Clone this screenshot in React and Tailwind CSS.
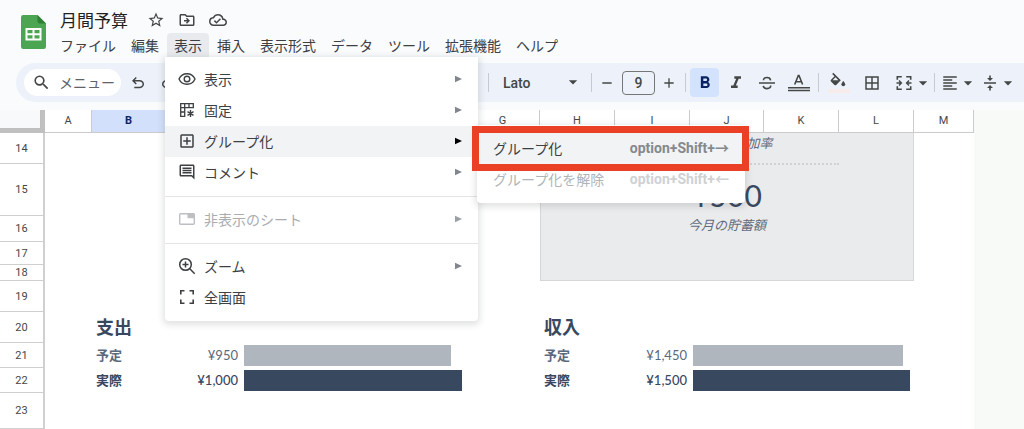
import React from "react";
import {
  MdAdd,
  MdArrowDropDown,
  MdBorderAll,
  MdFormatAlignLeft,
  MdFormatBold,
  MdFormatItalic,
  MdOutlineAddBox,
  MdOutlineCloudDone,
  MdOutlineComment,
  MdOutlineDriveFileMove,
  MdRemove,
  MdSearch,
  MdStarBorder,
} from "react-icons/md";

function SheetsLogo() {
  return (
    <svg viewBox="0 0 25 34" className="h-[34px] w-[25px] shrink-0" aria-hidden="true">
      <path d="M2.3 0H16.5L25 8.5V31.7A2.3 2.3 0 0 1 22.700 34H2.300A2.300 2.300 0 0 1 0 31.700V2.300A2.300 2.300 0 0 1 2.300 0Z" fill="#4ba551" />
      <path d="M16.500 0 25 8.500H18.500A2 2 0 0 1 16.500 6.500Z" fill="#2f7f36" />
      <path fillRule="evenodd" d="M4.500 13H20.500V25.500H4.500ZM6.500 15V18.300H11.500V15ZM13.500 15V18.300H18.500V15ZM6.500 20.300V23.500H11.500V20.300ZM13.500 20.300V23.500H18.500V20.300Z" fill="#fff" />
    </svg>
  );
}

function UndoIcon({ className }) {
  return (
    <svg viewBox="0 -960 960 960" fill="currentColor" className={className} aria-hidden="true">
      <path d="M280-200v-80h284q63 0 109.500-40T720-420q0-60-46.500-100T564-560H312l104 104-56 56-200-200 200-200 56 56-104 104h252q97 0 169.500 63T800-420q0 94-72.500 157T564-200H280Z" />
    </svg>
  );
}

function EyeIcon() {
  return (
    <svg viewBox="0 0 18 14" className="h-[14px] w-[18px] shrink-0" fill="none" stroke="currentColor" strokeWidth="1.400" aria-hidden="true">
      <path d="M1 7C2.500 3.600 5.500 1.700 9 1.700S15.500 3.600 17 7C15.500 10.400 12.500 12.300 9 12.300S2.500 10.400 1 7Z" />
      <circle cx="9" cy="7" r="2.800" />
    </svg>
  );
}

function ZoomIcon() {
  return (
    <svg viewBox="0 0 18 18" className="size-[18px] shrink-0" fill="none" stroke="currentColor" strokeWidth="1.500" aria-hidden="true">
      <circle cx="7.500" cy="7.500" r="5.800" />
      <path d="M11.800 11.800 16.700 16.700M7.500 4.500V10.500M4.500 7.500H10.500" />
    </svg>
  );
}

function HiddenSheetIcon() {
  return (
    <svg viewBox="0 0 18 14" className="h-[14px] w-[18px] shrink-0 text-[#bdbfc2]" aria-hidden="true">
      <rect x="1.700" y="1.700" width="14.600" height="10.600" rx="1" fill="none" stroke="currentColor" strokeWidth="1.400" />
      <path d="M9.500 1.700H16.300V6.200H9.500Z" fill="currentColor" />
    </svg>
  );
}

function FreezeIcon() {
  return (
    <svg viewBox="0 0 16 16" className="size-4" fill="none" stroke="currentColor" strokeWidth="1.300" aria-hidden="true">
      <path d="M1.700 14.300V1.700H14.300V5.700H5.700V14.300ZM5.700 1.700V5.700H1.700M10 1.700V5.700M1.700 10H5.700" />
      <path d="M11.500 8V15M8.500 9.700 14.500 13.300M14.500 9.700 8.500 13.300" strokeWidth="1.400" />
    </svg>
  );
}

function FullscreenIcon() {
  return (
    <svg viewBox="0 0 16 16" className="size-4" fill="none" stroke="currentColor" strokeWidth="1.600" aria-hidden="true">
      <path d="M1.800 5.500V1.800H5.500M10.500 1.800H14.200V5.500M14.200 10.500V14.200H10.500M5.500 14.200H1.800V10.500" />
    </svg>
  );
}

function StrikeIcon() {
  return (
    <svg viewBox="0 0 18 18" className="size-[18px]" fill="none" stroke="currentColor" strokeWidth="1.600" aria-hidden="true">
      <path d="M1 9H17" />
      <path d="M12.600 6.300C12.300 4.400 11 3.500 9 3.500 6.900 3.500 5.500 4.500 5.500 6.200M5.200 11.800C5.500 13.600 6.900 14.600 9 14.600 11.200 14.600 12.700 13.500 12.700 11.600" />
    </svg>
  );
}

function TextColorIcon() {
  return (
    <svg viewBox="0 0 24 18" className="h-[18px] w-6" fill="none" stroke="currentColor" aria-hidden="true">
      <path d="M7.700 10.500 11.300 1.500H12L15.600 10.500M9 7.700H14.300" strokeWidth="1.600" />
      <path d="M1 13.700H23M1 16.500H23" strokeWidth="1.500" />
    </svg>
  );
}

function FillColorIcon() {
  return (
    <svg viewBox="0 0 24 22" className="h-[22px] w-6" aria-hidden="true">
      <path fillRule="evenodd" d="M6.300 .800 13.800 8.300 9.200 12.900A1.200 1.200 0 0 1 7.500 12.900L4 9.400A1.200 1.200 0 0 1 4 7.700L7.500 4.200 5.200 1.900ZM8.500 5.300 5.600 8.200H11.400Z" fill="currentColor" />
      <path d="M16.300 8.900S18.200 11.100 18.200 12.300A1.900 1.900 0 0 1 14.400 12.300C14.400 11.100 16.300 8.900 16.300 8.900Z" fill="currentColor" />
      <rect x="1" y="17" width="22" height="4" fill="#f7ece9" />
    </svg>
  );
}

function MergeIcon() {
  return (
    <svg viewBox="0 0 18 16" className="h-4 w-[18px] shrink-0" fill="none" stroke="currentColor" strokeWidth="1.600" aria-hidden="true">
      <path d="M6.800 1.800H2.300V4.800M2.300 11.200V14.200H6.800M11.200 1.800H15.700V4.800M15.700 11.200V14.200H11.200" />
      <path d="M1.500 8H6M4 5.600 6.400 8 4 10.400M16.500 8H12M14 5.600 11.600 8 14 10.400" strokeWidth="1.400" />
    </svg>
  );
}

function VerticalMiddleIcon() {
  return (
    <svg viewBox="0 0 18 18" className="size-[18px] shrink-0" aria-hidden="true">
      <path d="M3 8.200H15V9.800H3ZM8.200 1.500H9.800V4H12L9 7 6 4H8.200ZM8.200 16.500H9.800V14H12L9 11 6 14H8.200Z" fill="currentColor" />
    </svg>
  );
}

const menus = ["ファイル", "編集", "表示", "挿入", "表示形式", "データ", "ツール", "拡張機能", "ヘルプ"];

function MenuRow({ icon, label, arrow = true, active = false, disabled = false }) {
  return (
    <button
      type="button"
      role="menuitem"
      disabled={disabled}
      className={`flex h-[31px] w-full items-center pr-4 pb-px pl-[13px] text-left ${active ? "bg-[#f1f3f4]" : ""} ${disabled ? "text-[#a9acb0]" : "text-[#3c4043]"}`}
    >
      <span className="flex w-[18px] justify-center">{icon}</span>
      <span className="ml-2 flex-1">{label}</span>
      {arrow && (
        <svg viewBox="0 0 7 8" className={`h-2 w-[7px] ${active ? "text-black" : disabled ? "text-[#9aa0a6]" : "text-[#80868b]"}`} aria-hidden="true">
          <path d="M0 .700 7 4 0 7.300Z" fill="currentColor" />
        </svg>
      )}
    </button>
  );
}

function Divider() {
  return <div role="separator" className="mt-2 mb-[7px] h-px bg-[#e3e5e7]" />;
}

function Submenu() {
  return (
    <div role="menu" className="absolute -top-px left-full z-30 -ml-px w-[268px] rounded bg-white py-2 shadow-[0_2px_6px_2px_rgba(60,64,67,0.15)]">
      <div className="relative">
        <button type="button" role="menuitem" className="flex h-[31px] w-full items-center justify-between bg-[#f1f3f4] px-4 pb-px text-[#3c4043]">
          グループ化
          <kbd className="font-['Roboto','Noto_Sans_CJK_JP',sans-serif] font-bold text-[#85898c]">option+Shift+→</kbd>
        </button>
        <div className="pointer-events-none absolute -top-[7px] -right-1 -bottom-[7px] -left-[5px] border-[7px] border-[#ea4025]" />
      </div>
      <button type="button" role="menuitem" disabled className="flex h-[31px] w-full items-center justify-between px-4 pb-px text-[#b0b4b8]">
        グループ化を解除
        <kbd className="font-['Roboto','Noto_Sans_CJK_JP',sans-serif] font-bold text-[#cfd1d3]">option+Shift+←</kbd>
      </button>
    </div>
  );
}

function ViewMenu() {
  return (
    <div role="menu" className="absolute top-full -left-0.5 z-20 w-[313px] rounded-b bg-white pt-[7px] pb-2 shadow-[0_2px_6px_2px_rgba(60,64,67,0.15)]">
      <MenuRow icon={<EyeIcon />} label="表示" />
      <MenuRow icon={<FreezeIcon />} label="固定" />
      <div className="relative">
        <MenuRow icon={<MdOutlineAddBox className="size-[18px] shrink-0" />} label="グループ化" active />
        <Submenu />
      </div>
      <MenuRow icon={<MdOutlineComment className="size-[18px] shrink-0" />} label="コメント" />
      <Divider />
      <MenuRow icon={<HiddenSheetIcon />} label="非表示のシート" disabled />
      <Divider />
      <MenuRow icon={<ZoomIcon />} label="ズーム" />
      <MenuRow icon={<FullscreenIcon />} label="全画面" arrow={false} />
    </div>
  );
}

function Header() {
  return (
    <header className="flex">
      <div className="w-[53px] shrink-0 pt-[15px] pl-[21px]">
        <SheetsLogo />
      </div>
      <div className="min-w-0 flex-1">
        <div className="flex h-[33px] items-center pt-2 pb-px pl-[7px] text-[#444746]">
          <h1 className="text-[17px] leading-6 text-[#1f1f1f]">月間予算</h1>
          <button type="button" aria-label="スター" className="ml-[19px]"><MdStarBorder className="size-[18px]" /></button>
          <button type="button" aria-label="移動" className="ml-[13px]"><MdOutlineDriveFileMove className="size-[18px]" /></button>
          <button type="button" aria-label="保存済み" className="ml-[13px]"><MdOutlineCloudDone className="size-[18px]" /></button>
        </div>
        <nav className="flex gap-px text-[14px] text-[#3c4043]">
          {menus.map((m) => (
            <div key={m} className="relative shrink-0">
              <button type="button" className={`h-6 px-[7px] leading-6 ${m === "表示" ? "rounded-t bg-[#e8eaed]" : ""}`}>{m}</button>
              {m === "表示" && <ViewMenu />}
            </div>
          ))}
        </nav>
      </div>
    </header>
  );
}

function Sep({ className = "" }) {
  return <div className={`h-[19px] w-px shrink-0 bg-[#c7cbd1] ${className}`} />;
}

function Tool({ label, className, children }) {
  return (
    <button type="button" aria-label={label} className={`flex h-[29px] shrink-0 items-center justify-center ${className}`}>
      {children}
    </button>
  );
}

function Toolbar() {
  return (
    <div className="mt-[6px] mb-2 ml-4 flex h-[39px] items-center overflow-hidden rounded-l-full bg-[#edf2fa] pl-2 text-[#444746]">
      <label className="flex h-[27px] w-[97px] shrink-0 items-center rounded-full bg-white pl-2">
        <MdSearch className="size-[19px] shrink-0" />
        <input aria-label="メニューを検索" placeholder="メニュー" className="ml-2 w-[60px] bg-transparent text-[14px] outline-none placeholder:text-[#5f6368]" />
      </label>
      <Tool label="元に戻す" className="ml-2 w-[18px]"><UndoIcon className="size-[18px]" /></Tool>
      <Tool label="やり直し" className="ml-3 w-[18px]"><UndoIcon className="size-[18px] -scale-x-100" /></Tool>
      <Sep className="ml-[311px]" />
      <div className="relative ml-[14px] w-[80px] shrink-0">
        <select aria-label="フォント" defaultValue="Lato" className="w-full appearance-none bg-transparent font-['Roboto',sans-serif] text-[14px] font-medium outline-none">
          <option>Lato</option>
        </select>
        <MdArrowDropDown className="pointer-events-none absolute top-0 right-0 size-5" />
      </div>
      <Sep className="ml-2" />
      <Tool label="縮小" className="ml-[7px] w-4"><MdRemove className="size-4" /></Tool>
      <input aria-label="フォントサイズ" defaultValue="9" className="ml-[7px] h-6 w-[33px] shrink-0 rounded border border-[#747775] bg-transparent text-center font-['Roboto',sans-serif] text-[14px] font-medium outline-none" />
      <Tool label="拡大" className="ml-[6px] w-4"><MdAdd className="size-4" /></Tool>
      <Sep className="ml-2" />
      <Tool label="太字" className="ml-1 w-[29px] rounded bg-[#d3e3fd] text-[#0b2262]"><MdFormatBold className="size-5" /></Tool>
      <Tool label="斜体" className="ml-[7px] w-5"><MdFormatItalic className="size-5" /></Tool>
      <Tool label="取り消し線" className="ml-3 w-[18px]"><StrikeIcon /></Tool>
      <Tool label="文字色" className="ml-[11px] w-6"><TextColorIcon /></Tool>
      <Sep className="ml-[7px]" />
      <Tool label="塗りつぶし" className="ml-2 w-6"><FillColorIcon /></Tool>
      <Tool label="枠線" className="ml-3 w-[18px]"><MdBorderAll className="size-[18px]" /></Tool>
      <Tool label="セル結合" className="ml-[14px] w-[38px]"><MergeIcon /><MdArrowDropDown className="size-5 shrink-0" /></Tool>
      <Sep className="ml-px" />
      <Tool label="水平配置" className="ml-[6px] w-[36px]"><MdFormatAlignLeft className="size-[18px] shrink-0" /><MdArrowDropDown className="-ml-px size-5 shrink-0" /></Tool>
      <Tool label="垂直配置" className="ml-1 w-[36px]"><VerticalMiddleIcon /><MdArrowDropDown className="-ml-px size-5 shrink-0" /></Tool>
    </div>
  );
}

function SummaryCard() {
  return (
    <td colSpan={5} rowSpan={5} className="border-r border-b border-l border-[#d5d7d9] bg-[#eaebed] p-0 align-top">
      <div className="flex flex-col items-center text-[#5f6b7c]">
        <p className="text-[13px] leading-5 italic">貯蓄額の増加率</p>
        <div className="mt-[10px] w-3/5 border-t-2 border-dotted border-[#cfd1d3]" />
        <p className="mt-3 font-['Lato','Noto_Sans_CJK_JP',sans-serif] text-[30px] leading-9 text-[#38485f]">¥500</p>
        <p className="mt-[2px] text-[13px] leading-5 italic">今月の貯蓄額</p>
      </div>
    </td>
  );
}

function AmountCells({ label, amount, bar, strong }) {
  const tone = strong ? "text-[#38485f]" : "text-[#5a697c]";
  return (
    <>
      <td className={`p-0 pb-0.5 pl-1 text-[13px] font-bold ${tone}`}>{label}</td>
      <td className={`p-0 pr-[3px] text-right font-['Lato','Noto_Sans_CJK_JP',sans-serif] text-[13px] ${strong ? "font-medium" : ""} ${tone}`}>{amount}</td>
      <td colSpan={3} className="p-0 pl-[3px]">
        <div className={`h-[21px] ${bar} ${strong ? "bg-[#38485f]" : "bg-[#afb6be]"}`} />
      </td>
    </>
  );
}

function RowHead({ n }) {
  return (
    <th scope="row" className="border-r-2 border-b border-r-[#d0d0d0] border-b-[#cfcfcf] p-0 text-center font-['Roboto',sans-serif] text-[11px] leading-none font-normal text-[#444746]">
      {n}
    </th>
  );
}

const Filler = () => <td className="bg-[#f8faf7] p-0" />;

function Sheet() {
  return (
    <table className="w-full table-fixed border-separate border-spacing-0 bg-white leading-none">
      <colgroup>
        <col className="w-[45px]" />
        <col className="w-[47px]" />
        <col className="w-[74px]" />
        {["C", "D", "E", "F"].map((c) => <col key={c} className="w-[75px]" />)}
        <col className="w-[74px]" />
        <col className="w-[75px]" />
        <col className="w-[75px]" />
        <col className="w-[74px]" />
        <col className="w-[75px]" />
        <col className="w-[75px]" />
        <col className="w-[60px]" />
        <col />
      </colgroup>
      <thead>
        <tr className="h-[23px]">
          <td className="border-r-[5px] border-b-[5px] border-[#c0c0c0] bg-[#f8f9fa] p-0" />
          {"ABCDEFGHIJKLM".split("").map((c) => (
            <th
              key={c}
              scope="col"
              className={`border-r border-b border-[#c9cbcd] p-0 pb-px text-center font-['Roboto',sans-serif] text-[11px] leading-none ${c === "B" ? "bg-[#d3e0fb] font-bold text-[#0b2262]" : "font-normal text-[#444746]"}`}
            >
              {c}
            </th>
          ))}
          <Filler />
        </tr>
      </thead>
      <tbody>
        <tr className="h-[31px]"><RowHead n={14} /><td colSpan={7} /><SummaryCard /><td /><Filler /></tr>
        <tr className="h-[52px]"><RowHead n={15} /><td colSpan={7} /><td /><Filler /></tr>
        <tr className="h-[26px]"><RowHead n={16} /><td colSpan={7} /><td /><Filler /></tr>
        <tr className="h-[23px]"><RowHead n={17} /><td colSpan={7} /><td /><Filler /></tr>
        <tr className="h-4"><RowHead n={18} /><td colSpan={7} /><td /><Filler /></tr>
        <tr className="h-[31px]"><RowHead n={19} /><td colSpan={13} /><Filler /></tr>
        <tr className="h-[31px] text-[18px] font-bold text-[#38485f]">
          <RowHead n={20} />
          <td className="p-0" />
          <td colSpan={6} className="p-0 pb-[3px] pl-1">支出</td>
          <td colSpan={6} className="p-0 pb-[3px] pl-1">収入</td>
          <Filler />
        </tr>
        <tr className="h-[25px]">
          <RowHead n={21} />
          <td />
          <AmountCells label="予定" amount="¥950" bar="w-[207px]" />
          <td />
          <AmountCells label="予定" amount="¥1,450" bar="w-[210px]" />
          <td />
          <Filler />
        </tr>
        <tr className="h-[25px]">
          <RowHead n={22} />
          <td />
          <AmountCells label="実際" amount="¥1,000" bar="w-[218px]" strong />
          <td />
          <AmountCells label="実際" amount="¥1,500" bar="w-[217px]" strong />
          <td />
          <Filler />
        </tr>
        <tr className="h-9"><RowHead n={23} /><td colSpan={13} /><Filler /></tr>
      </tbody>
    </table>
  );
}

export default function App() {
  return (
    <div className="min-h-screen bg-[#f9fbfd] font-['Noto_Sans_CJK_JP',sans-serif] text-[14px]">
      <Header />
      <Toolbar />
      <Sheet />
    </div>
  );
}
